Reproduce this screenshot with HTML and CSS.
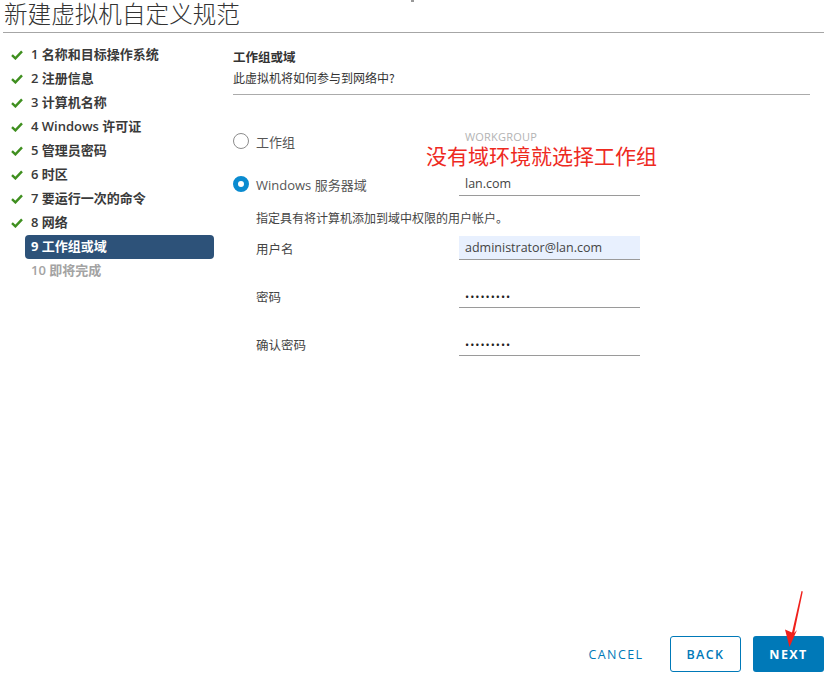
FILE: index.html
```html
<!DOCTYPE html>
<html lang="zh">
<head>
<meta charset="utf-8">
<link rel="stylesheet" href="styles.css">
</head>
<body>
<div class="page">
  <header class="title-bar">
    <h1 class="title">新建虚拟机自定义规范</h1>
    <span class="corner-mark"></span>
  </header>
  <div class="body">
    <nav class="steps">
      <div class="step done"><span class="ico"><svg width="12" height="10" viewBox="0 0 12 10"><path d="M1 5.2 L4.4 8.4 L11 1.4" fill="none" stroke="#3f8f1f" stroke-width="2.4"/></svg></span><span class="lbl">1 名称和目标操作系统</span></div>
      <div class="step done"><span class="ico"><svg width="12" height="10" viewBox="0 0 12 10"><path d="M1 5.2 L4.4 8.4 L11 1.4" fill="none" stroke="#3f8f1f" stroke-width="2.4"/></svg></span><span class="lbl">2 注册信息</span></div>
      <div class="step done"><span class="ico"><svg width="12" height="10" viewBox="0 0 12 10"><path d="M1 5.2 L4.4 8.4 L11 1.4" fill="none" stroke="#3f8f1f" stroke-width="2.4"/></svg></span><span class="lbl">3 计算机名称</span></div>
      <div class="step done"><span class="ico"><svg width="12" height="10" viewBox="0 0 12 10"><path d="M1 5.2 L4.4 8.4 L11 1.4" fill="none" stroke="#3f8f1f" stroke-width="2.4"/></svg></span><span class="lbl">4 Windows 许可证</span></div>
      <div class="step done"><span class="ico"><svg width="12" height="10" viewBox="0 0 12 10"><path d="M1 5.2 L4.4 8.4 L11 1.4" fill="none" stroke="#3f8f1f" stroke-width="2.4"/></svg></span><span class="lbl">5 管理员密码</span></div>
      <div class="step done"><span class="ico"><svg width="12" height="10" viewBox="0 0 12 10"><path d="M1 5.2 L4.4 8.4 L11 1.4" fill="none" stroke="#3f8f1f" stroke-width="2.4"/></svg></span><span class="lbl">6 时区</span></div>
      <div class="step done"><span class="ico"><svg width="12" height="10" viewBox="0 0 12 10"><path d="M1 5.2 L4.4 8.4 L11 1.4" fill="none" stroke="#3f8f1f" stroke-width="2.4"/></svg></span><span class="lbl">7 要运行一次的命令</span></div>
      <div class="step done"><span class="ico"><svg width="12" height="10" viewBox="0 0 12 10"><path d="M1 5.2 L4.4 8.4 L11 1.4" fill="none" stroke="#3f8f1f" stroke-width="2.4"/></svg></span><span class="lbl">8 网络</span></div>
      <div class="step active"><span class="ico"></span><span class="lbl">9 工作组或域</span></div>
      <div class="step pending"><span class="ico"></span><span class="lbl">10 即将完成</span></div>
    </nav>
    <main class="content">
      <div class="section-head">
        <div class="section-title">工作组或域</div>
        <div class="section-sub">此虚拟机将如何参与到网络中?</div>
      </div>
      <div class="form">
        <div class="row radio-row first">
          <label class="radio-label"><span class="radio"></span>工作组</label>
          <div class="field plain"><span class="placeholder">WORKGROUP</span></div>
        </div>
        <div class="row radio-row">
          <label class="radio-label"><span class="radio checked"></span>Windows 服务器域</label>
          <div class="field"><span class="val">lan.com</span></div>
        </div>
        <div class="hint">指定具有将计算机添加到域中权限的用户帐户。</div>
        <div class="row cred-row">
          <span class="cred-label">用户名</span>
          <div class="field filled"><span class="val">administrator@lan.com</span></div>
        </div>
        <div class="row cred-row">
          <span class="cred-label">密码</span>
          <div class="field"><span class="dots">•••••••••</span></div>
        </div>
        <div class="row cred-row">
          <span class="cred-label">确认密码</span>
          <div class="field"><span class="dots">•••••••••</span></div>
        </div>
      </div>
    </main>
  </div>
  <footer class="footer">
    <button class="btn link">CANCEL</button>
    <button class="btn outline">BACK</button>
    <button class="btn primary">NEXT</button>
  </footer>
  <div class="note">没有域环境就选择工作组</div>
  <svg class="arrow" width="30" height="60" viewBox="0 0 30 60"><path d="M22.5 1 L23.8 1.4 L15.2 43 L18 40 L10.5 57 L6 39.5 L13 42.5 Z" fill="#f0211c"/></svg>
</div>
</body>
</html>
```
FILE: styles.css
```css
* { box-sizing: border-box; }
html, body { margin: 0; padding: 0; background: #fff; }
body {
  font-family: "Open Sans", "Noto Sans CJK SC", sans-serif;
  color: #333;
}
.page {
  position: relative;
  width: 824px;
  height: 673px;
  display: flex;
  flex-direction: column;
  overflow: hidden;
}
.title-bar {
  height: 33px;
  margin-left: 3px;
  border-bottom: 1px solid #a6a6a6;
  position: relative;
}
.title {
  margin: -3px 0 0 0;
  padding-left: 1px;
  font-family: "Noto Sans CJK SC", sans-serif;
  font-weight: 300;
  font-size: 23.6px;
  line-height: 32px;
  color: #333;
}
.corner-mark {
  position: absolute;
  left: 408px;
  top: 0;
  width: 3px;
  height: 2px;
  background: #999;
}
.body {
  flex: 1;
  display: flex;
}
.steps {
  width: 214px;
  padding-top: 10px;
  display: flex;
  flex-direction: column;
}
.step {
  display: flex;
  align-items: center;
  height: 24px;
}
.ico {
  width: 25px;
  padding-left: 11px;
  display: flex;
  align-items: center;
}
.lbl {
  flex: 1;
  height: 24px;
  line-height: 23px;
  padding-left: 6px;
  font-size: 13px;
  font-weight: 600;
  color: #3a3a3a;
  border-radius: 4px;
  white-space: nowrap;
}
.step.active .lbl {
  background: #2d5279;
  color: #fff;
  font-weight: 700;
}
.step.pending .lbl { color: #a3a3a3; }
.content {
  flex: 1;
  margin-left: 19px;
  margin-right: 14px;
  padding-top: 14px;
}
.section-head {
  border-bottom: 1px solid #ababab;
  padding-bottom: 5px;
}
.section-title {
  font-family: "Noto Sans CJK SC", sans-serif;
  font-size: 12.5px;
  font-weight: 700;
  line-height: 20px;
  color: #333;
}
.section-sub {
  font-family: "Noto Sans CJK SC", sans-serif;
  font-size: 12px;
  line-height: 22px;
  color: #333;
}
.form { padding-top: 34px; }
.row {
  display: grid;
  grid-template-columns: 226px 181px;
  align-items: center;
}
.radio-row { height: 24px; margin-top: 0; }
.radio-row + .radio-row { margin-top: 19px; }
.radio-label {
  display: flex;
  align-items: center;
  gap: 7px;
  font-size: 13px;
  color: #565656;
}
.radio {
  width: 16px;
  height: 16px;
  border: 1px solid #8c8c8c;
  border-radius: 50%;
  background: #fff;
}
.radio.checked {
  border: 5px solid #0a8bd0;
  background: #fff;
}
.field {
  height: 24px;
  border-bottom: 1px solid #9a9a9a;
  padding-left: 6px;
  display: flex;
  align-items: center;
  font-size: 12.5px;
  color: #444;
}
.field.plain { border-bottom: none; align-items: flex-start; }
.placeholder {
  font-size: 11px;
  color: #b3b3b3;
  letter-spacing: 0.2px;
  margin-top: 0;
}
.field.filled { background: #e8f0fe; height: 24px; }
.dots { font-size: 11px; letter-spacing: 1px; color: #222; padding-top: 2px; }
.hint {
  margin-top: 12px;
  padding-left: 23px;
  font-family: "Noto Sans CJK SC", sans-serif;
  font-size: 12px;
  line-height: 20px;
  color: #444;
}
.cred-row { height: 24px; margin-top: 8px; }
.cred-row + .cred-row { margin-top: 24px; }
.cred-label {
  padding-left: 23px;
  font-family: "Noto Sans CJK SC", sans-serif;
  font-size: 12.5px;
  color: #444;
}
.footer {
  height: 37px;
  display: flex;
  justify-content: flex-end;
  align-items: flex-start;
  gap: 12px;
  padding-bottom: 1px;
}
.btn {
  height: 36px;
  width: 71px;
  font-family: "Open Sans", sans-serif;
  font-size: 12.5px;
  font-weight: 600;
  letter-spacing: 1.4px;
  border-radius: 3px;
  cursor: pointer;
}
.btn.link {
  width: 82px;
  border: none;
  background: transparent;
  color: #0079b8;
  font-weight: 500;
  margin-right: 1px;
}
.btn.outline {
  border: 1px solid #0079b8;
  background: #fff;
  color: #0079b8;
}
.btn.primary {
  border: none;
  background: #0079b8;
  color: #fff;
  font-weight: 700;
}
.note {
  position: absolute;
  left: 426px;
  top: 142px;
  font-family: "Noto Sans CJK SC", sans-serif;
  font-size: 21px;
  line-height: 26px;
  color: #ee2a1f;
}
.arrow {
  position: absolute;
  left: 779px;
  top: 590px;
}
```
